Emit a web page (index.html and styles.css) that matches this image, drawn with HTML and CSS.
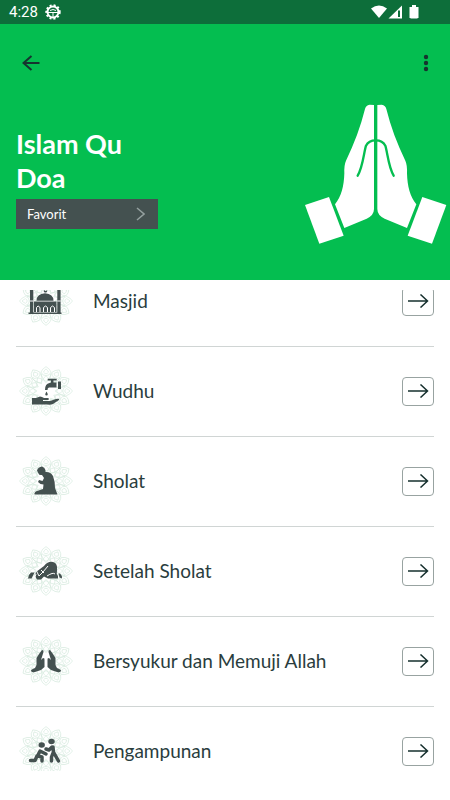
FILE: index.html
```html
<!DOCTYPE html>
<html lang="id">
<head>
<meta charset="utf-8">
<meta name="viewport" content="width=device-width, initial-scale=1">
<title>Islam Qu Doa</title>
<link rel="stylesheet" href="styles.css">
</head>
<body>
<svg class="defs" aria-hidden="true">
  <defs>
    <g id="petal">
      <path d="M-5 -20.500Q-4 -24 0 -26.500Q4 -24 5 -20.500L3 -17.500Q0 -16 -3 -17.500Z M-2.500 -20.500Q-2 -22 0 -24Q2 -22 2.500 -20.500Q0 -17 -2.500 -20.500Z"/>
      <path d="M-3 -12.500Q-2 -15 0 -16.500Q2 -15 3 -12.500Q0 -9 -3 -12.500Z M-5 -19L-4 -15L0 -9L4 -15L5 -19"/>
    </g>
    <g id="mandala" transform="translate(27 25) scale(1 .92)">
      <use href="#petal"/>
      <use href="#petal" transform="rotate(30)"/>
      <use href="#petal" transform="rotate(60)"/>
      <use href="#petal" transform="rotate(90)"/>
      <use href="#petal" transform="rotate(120)"/>
      <use href="#petal" transform="rotate(150)"/>
      <use href="#petal" transform="rotate(180)"/>
      <use href="#petal" transform="rotate(210)"/>
      <use href="#petal" transform="rotate(240)"/>
      <use href="#petal" transform="rotate(270)"/>
      <use href="#petal" transform="rotate(300)"/>
      <use href="#petal" transform="rotate(330)"/>
    </g>
    <g id="arrow"><path d="M1 7H20.500M13.500 .5L20.500 7L13.500 13.500"/></g>
    <g id="hand">
      <path d="M237 30L224 29Q212 31 210 42C197 95 178 145 153 197Q147 210 148 235C147 275 139 304 120 328L148 399L215 371Q237 361 237 342Z"/>
      <path d="M30 330L102 306L146 422L73 446Z"/>
      <path class="thumb" d="M188 242C204 215 206 175 213 152Q221 136 242 136"/>
    </g>
  </defs>
</svg>

<header class="header">
  <div class="status">
    <span class="clock">4:28</span>
    <svg class="gear" width="16" height="16" viewBox="0 0 16 16" aria-hidden="true">
      <circle cx="8" cy="8" r="6.7" class="teeth"/>
      <circle cx="8" cy="8" r="5.5" class="rim"/>
      <path class="spokes" d="M3 8.500H13M8 8.500V13M5 6.500Q8 4.500 11 6.500"/>
    </svg>
    <svg class="signals" width="50" height="14" viewBox="0 0 50 14" aria-hidden="true">
      <path d="M0 3.500Q8 -2.500 16 3.500L8 13Z"/>
      <path d="M17.500 13.500L31 .5V13.500Z"/>
      <path class="gap" d="M27 5.500H29V12H27Z"/>
      <path d="M39 2H41V0H45V2H47.500V13H46.500V13.500H39.500V13H38.500V2Z"/>
    </svg>
  </div>
  <nav class="toolbar">
    <button class="tool" type="button" aria-label="Kembali">
      <svg width="18" height="16" viewBox="0 0 18 16"><path class="line" d="M17.500 8H1.500M9.500 1L1.500 8L9.500 15"/></svg>
    </button>
    <button class="tool" type="button" aria-label="Menu">
      <svg width="6" height="18" viewBox="0 0 6 18"><circle cx="3" cy="3" r="2.200"/><circle cx="3" cy="9" r="2.200"/><circle cx="3" cy="15" r="2.200"/></svg>
    </button>
  </nav>
  <div class="hero">
    <div class="intro">
      <h1 class="title">Islam Qu<br>Doa</h1>
      <button class="favorite" type="button">
        <span>Favorit</span>
        <svg width="9" height="14" viewBox="0 0 9 14" aria-hidden="true"><path d="M1 1L8 7L1 13"/></svg>
      </button>
    </div>
    <svg class="hands" width="143" height="140" viewBox="27 27 429 420" aria-hidden="true">
      <use href="#hand"/>
      <use href="#hand" transform="translate(484 0) scale(-1 1)"/>
    </svg>
  </div>
</header>

<main class="viewport">
  <ul class="list">
    <li class="row">
      <svg class="icon" width="54" height="50" viewBox="0 0 54 50" aria-hidden="true">
        <use href="#mandala" class="pattern"/>
        <path d="M11 8L12.500 5L14.300 8V37H11Z M38.300 8L40 5L41.600 8V37H38.300Z M17.500 24.700Q17.500 18 26 17.300Q34.500 18 34.500 24.700Z M25 14Q24 17 27 16.500Q28.500 16 28 14Q27 16 25 14Z M15 25.500H37.500V36H15Z"/>
        <path d="M9.500 36.500H42.500V38H9.500Z"/>
        <path class="cut" d="M17.500 36V31.500Q19 28.500 21 31.500V36 M24.500 36V31.500Q26.500 28.500 28.500 31.500V36 M31.500 36V31.500Q33.500 28.500 35.500 31.500V36 M11 25H14.300M38.300 25H41.600"/>
      </svg>
      <span class="name">Masjid</span>
      <button class="open" type="button" aria-label="Buka Masjid"><svg width="22" height="14" viewBox="0 0 22 14"><use href="#arrow"/></svg></button>
    </li>
    <li class="row">
      <svg class="icon" width="54" height="50" viewBox="0 0 54 50" aria-hidden="true">
        <use href="#mandala" class="pattern"/>
        <path d="M28.700 12.700H37.700V14.500H34.500V16.500H37.500V21.500H30Q28.500 21.500 28.500 24H26Q26 17.500 30.500 17L32 16.500V14.500H28.700Z M39 15.500H42V23H39Z M27.500 25.500Q30 29.500 27.500 29.500Q25 29.500 27.500 25.500Z"/>
        <path d="M13 32H17L21 30.500Q23 30.500 25 32H29Q31 33 29 34H24V35H31L37 33Q41 32 40 34L34 38Q32 39 28 38.500H13Z"/>
      </svg>
      <span class="name">Wudhu</span>
      <button class="open" type="button" aria-label="Buka Wudhu"><svg width="22" height="14" viewBox="0 0 22 14"><use href="#arrow"/></svg></button>
    </li>
    <li class="row">
      <svg class="icon" width="54" height="50" viewBox="0 0 54 50" aria-hidden="true">
        <use href="#mandala" class="pattern"/>
        <path d="M18 14.500Q19 11 23 10.500Q27 12 26.500 16Q31.500 15.500 34 20Q36 25 36 32L38.500 38.500H15.500Q15 36 18 35L24 33L24.500 28.500L21.500 28L19 26L20 24L23.500 25L25 22L23 19Q20 19.500 19.500 17.500Z"/>
      </svg>
      <span class="name">Sholat</span>
      <button class="open" type="button" aria-label="Buka Sholat"><svg width="22" height="14" viewBox="0 0 22 14"><use href="#arrow"/></svg></button>
    </li>
    <li class="row">
      <svg class="icon" width="54" height="50" viewBox="0 0 54 50" aria-hidden="true">
        <use href="#mandala" class="pattern"/>
        <path d="M17 26L25 20Q29 15 34 16Q39 17 38 25Q37 28 39 30V32.500H29L25 30.500L22 33.500H18L16 30Z M12 26.500H15.500L12.500 32.500H9Q9 29 12 26.500Z M39.500 27.500H41Q43 29 43 32.500L40.500 31.500Z"/>
        <path class="cut" d="M17 24L20 30L24 26L29 20M22 24L25 27M28 30Q34 26 36 28M15.500 32L17 28"/>
      </svg>
      <span class="name">Setelah Sholat</span>
      <button class="open" type="button" aria-label="Buka Setelah Sholat"><svg width="22" height="14" viewBox="0 0 22 14"><use href="#arrow"/></svg></button>
    </li>
    <li class="row">
      <svg class="icon" width="54" height="50" viewBox="0 0 54 50" aria-hidden="true">
        <use href="#mandala" class="pattern"/>
        <path id="palm" d="M23 14Q25 14 24.500 16L22 24L24 22Q26 22 25.500 24V31L22 34L16 36Q12 37 12 34.500Q12 33.500 16 32L17.500 29V22L20 18Z"/>
        <use href="#palm" transform="translate(54 0) scale(-1 1)"/>
      </svg>
      <span class="name">Bersyukur dan Memuji Allah</span>
      <button class="open" type="button" aria-label="Buka Bersyukur dan Memuji Allah"><svg width="22" height="14" viewBox="0 0 22 14"><use href="#arrow"/></svg></button>
    </li>
    <li class="row">
      <svg class="icon" width="54" height="50" viewBox="0 0 54 50" aria-hidden="true">
        <use href="#mandala" class="pattern"/>
        <ellipse cx="22.700" cy="19" rx="3.200" ry="2.800"/>
        <ellipse cx="32.500" cy="15.500" rx="3.200" ry="2.800"/>
        <path class="limb" d="M20.500 26L18.500 30M21 25L27 28M18.500 30L23 31V35M18 30L16 34.500H11.500"/>
        <path class="limb" d="M34 21L34.500 27M33 21L30 24L27 23M34 27L32.500 31V35M35 27L39.500 35"/>
      </svg>
      <span class="name">Pengampunan</span>
      <button class="open" type="button" aria-label="Buka Pengampunan"><svg width="22" height="14" viewBox="0 0 22 14"><use href="#arrow"/></svg></button>
    </li>
  </ul>
</main>
</body>
</html>
```
FILE: styles.css
```css
* {
  box-sizing: border-box;
}

body {
  margin: 0;
  height: 100vh;
  display: flex;
  flex-direction: column;
  background: #fff;
  color: #2a3d3d;
  font-family: Lato, "Open Sans", sans-serif;
}

button {
  padding: 0;
  border: 0;
  background: none;
  font: inherit;
  color: inherit;
}

svg {
  display: block;
  flex: none;
}

.defs {
  position: absolute;
  width: 0;
  height: 0;
}

.header {
  flex: none;
  background: #04be50;
  padding-bottom: 36px;
}

.status {
  display: flex;
  align-items: center;
  gap: 7px;
  height: 24px;
  padding: 0 29px 0 9px;
  background: #0d6e3a;
  color: #fff;
}

.clock {
  font: 15px/24px Roboto, sans-serif;
}

.gear {
  fill: none;
  stroke: #fff;
}

.teeth {
  stroke-width: 2;
  stroke-dasharray: 2 2;
}

.rim {
  stroke-width: 2;
}

.spokes {
  stroke-width: 1;
}

.signals {
  margin-left: auto;
  fill: #fff;
}

.signals .gap {
  fill: #0d6e3a;
}

.toolbar {
  display: flex;
  justify-content: space-between;
  align-items: center;
  height: 77px;
  padding: 0 21px 0 22px;
}

.tool {
  fill: #16342f;
}

.line {
  fill: none;
  stroke: #16342f;
  stroke-width: 2;
}

.hero {
  display: flex;
  justify-content: space-between;
  padding: 3px 3px 0 16px;
}

.intro {
  padding-top: 23px;
}

.title {
  margin: 0 0 4px;
  color: #fff;
  font-size: 27px;
  line-height: 34px;
  font-weight: 700;
}

.favorite {
  display: flex;
  align-items: center;
  justify-content: space-between;
  width: 142px;
  height: 30px;
  padding: 0 13px 0 11px;
  background: #445150;
  color: #fff;
  font-size: 13px;
  line-height: 16px;
}

.favorite svg {
  fill: none;
  stroke: #94a09f;
  stroke-width: 1.500;
}

.hands {
  fill: #fff;
}

.thumb {
  fill: none;
  stroke: #04be50;
  stroke-width: 7;
  stroke-linecap: round;
}

.viewport {
  flex: 1;
  min-height: 0;
  margin: 10px 16px 29px;
  overflow: hidden;
}

/* The list rests part-way through its first row. */
.list {
  margin: -33px 0 0;
  padding: 0;
  list-style: none;
}

.row {
  display: flex;
  align-items: center;
  height: 90px;
  padding: 0 0 1px 3px;
  border-bottom: 1px solid #d0d5d4;
}

.icon {
  fill: #445150;
}

.pattern {
  fill: none;
  stroke: #d5eade;
  stroke-width: .7;
}

.cut {
  fill: none;
  stroke: #fff;
  stroke-width: 1;
}

.limb {
  fill: none;
  stroke: #445150;
  stroke-width: 3.500;
  stroke-linecap: round;
  stroke-linejoin: round;
}

.name {
  flex: 1;
  margin-left: 20px;
  font-size: 19px;
  line-height: 24px;
}

.open {
  display: grid;
  place-items: center;
  width: 32px;
  height: 29px;
  border: 1px solid #98a3a1;
  border-radius: 4px;
}

.open svg {
  fill: none;
  stroke: #16302e;
  stroke-width: 1.500;
}
```
